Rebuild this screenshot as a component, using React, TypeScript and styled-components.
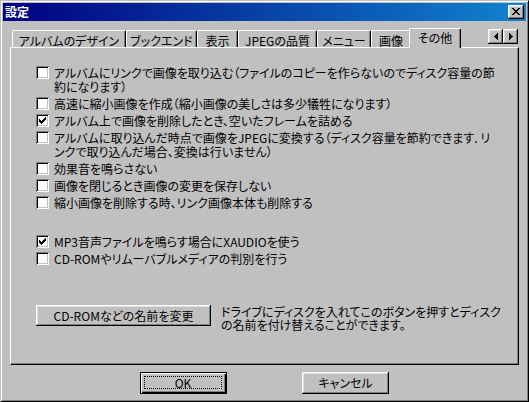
import React from 'react';
import styled, { createGlobalStyle } from 'styled-components';

const GlobalStyle = createGlobalStyle`
  html, body {
    margin: 0;
    padding: 0;
    background: #c0c0c0;
  }
  body {
    font-family: "Noto Sans CJK JP", "Noto Sans", sans-serif;
    font-size: 12px;
    color: #000;
    font-feature-settings: "palt";
  }
`;

const Window = styled.div`
  width: 529px;
  height: 402px;
  box-sizing: border-box;
  background: #c0c0c0;
  border: 1px solid;
  border-color: #c0c0c0 #000 #000 #c0c0c0;
  box-shadow: inset 1px 1px #fff, inset -1px -1px #808080;
  padding: 2px;
  display: flex;
  flex-direction: column;
`;

const TitleBar = styled.div`
  height: 18px;
  flex: none;
  display: flex;
  align-items: center;
  justify-content: space-between;
  padding: 0 2px 0 2px;
  background: linear-gradient(90deg, #000080, #1084d0);
`;

const Title = styled.span`
  color: #fff;
  font-weight: 700;
  font-size: 12px;
  line-height: 14px;
`;

const RaisedButton = styled.div`
  background: #c0c0c0;
  box-shadow: inset -1px -1px #000, inset 1px 1px #fff, inset -2px -2px #808080,
    inset 2px 2px #dfdfdf;
  box-sizing: border-box;
  display: flex;
  align-items: center;
  justify-content: center;
`;

const CaptionButton = styled(RaisedButton)`
  width: 16px;
  height: 14px;
  padding-bottom: 1px;
`;

const Body = styled.div`
  flex: 1;
  display: flex;
  flex-direction: column;
  padding: 7px 7px 0;
`;

const TabStrip = styled.div`
  height: 19px;
  flex: none;
  display: flex;
  align-items: flex-end;
  padding: 0 1px 0 2px;
`;

const Tab = styled.div<{ $w: number; $active?: boolean }>`
  width: ${(p) => p.$w + (p.$active ? 4 : 0)}px;
  height: ${(p) => (p.$active ? 20 : 17)}px;
  margin: ${(p) => (p.$active ? '0 -2px -1px' : '0')};
  box-sizing: border-box;
  flex: none;
  position: ${(p) => (p.$active ? 'relative' : 'static')};
  z-index: ${(p) => (p.$active ? 1 : 'auto')};
  background: #c0c0c0;
  border-top: 1px solid #fff;
  border-left: 1px solid #fff;
  border-right: 1px solid #000;
  border-radius: 2px 2px 0 0;
  box-shadow: inset -1px 0 #808080;
  display: flex;
  align-items: center;
  justify-content: center;
  padding: ${(p) => (p.$active ? '0 0 3px' : '2px 0 0')};
  line-height: 13px;
  white-space: nowrap;
`;

const TabScroller = styled.div`
  margin-left: auto;
  align-self: flex-start;
  margin-top: 1px;
  display: flex;
`;

const ScrollButton = styled(RaisedButton)`
  width: 15px;
  height: 15px;
`;

const Panel = styled.div`
  height: 318px;
  flex: none;
  box-sizing: border-box;
  border: 1px solid;
  border-color: #fff #000 #000 #fff;
  box-shadow: inset -1px -1px #808080;
  padding: 18px 0 0 25px;
  display: flex;
  flex-direction: column;
`;

const OptionList = styled.div<{ $top?: number }>`
  display: flex;
  flex-direction: column;
  gap: 4px;
  margin-top: ${(p) => p.$top ?? 0}px;
`;

const Option = styled.div<{ $multi?: boolean }>`
  display: flex;
  align-items: flex-start;
  gap: 5px;
  margin-bottom: ${(p) => (p.$multi ? -1 : 0)}px;
`;

const Box = styled.div`
  width: 13px;
  height: 13px;
  flex: none;
  box-sizing: border-box;
  background: #fff;
  box-shadow: inset 1px 1px #808080, inset -1px -1px #fff, inset 2px 2px #000,
    inset -2px -2px #c0c0c0;
  padding: 3px;
`;

const Label = styled.span<{ $multi?: boolean }>`
  line-height: ${(p) => (p.$multi ? 14 : 13)}px;
  white-space: nowrap;
`;

const RenameRow = styled.div`
  margin-top: 40px;
  display: flex;
  align-items: flex-start;
  gap: 10px;
`;

const PushButton = styled(RaisedButton)<{ $w: number; $h?: number }>`
  width: ${(p) => p.$w}px;
  height: ${(p) => p.$h ?? 21}px;
  padding-bottom: 1px;
  line-height: 13px;
  white-space: nowrap;
`;

const Hint = styled.div`
  line-height: 13px;
  white-space: nowrap;
`;

const Footer = styled.div`
  display: flex;
  justify-content: center;
  gap: 75px;
  padding-top: 7px;
`;

const DefaultButton = styled.div`
  width: 87px;
  height: 22px;
  box-sizing: border-box;
  border: 1px solid #000;
  background: #c0c0c0;
  box-shadow: inset 1px 1px #fff, inset -1px -1px #000, inset -2px -2px #808080;
  padding: 3px 4px 4px 3px;
  display: flex;
`;

const FocusRing = styled.div`
  flex: 1;
  border: 1px dotted #000;
  display: flex;
  align-items: center;
  justify-content: center;
  line-height: 12px;
`;

const Check = () => (
  <svg width="7" height="7" viewBox="0 0 7 7" shapeRendering="crispEdges" style={{ display: 'block' }}>
    <path
      fill="#000"
      d="M6 0h1v1h-1z M5 1h2v1h-2z M0 2h1v1h-1z M4 2h3v1h-3z M0 3h2v1h-2z M3 3h3v1h-3z M0 4h5v1h-5z M1 5h3v1h-3z M2 6h1v1h-1z"
    />
  </svg>
);

const CloseGlyph = () => (
  <svg width="8" height="7" viewBox="0 0 8 7" shapeRendering="crispEdges">
    <path
      fill="#000"
      d="M0 0h2v1h-2z M6 0h2v1h-2z M1 1h2v1h-2z M5 1h2v1h-2z M2 2h4v1h-4z M3 3h2v1h-2z M2 4h4v1h-4z M1 5h2v1h-2z M5 5h2v1h-2z M0 6h2v1h-2z M6 6h2v1h-2z"
    />
  </svg>
);

const Arrow = ({ dir }: { dir: 'left' | 'right' }) => (
  <svg
    width="4"
    height="7"
    viewBox="0 0 4 7"
    shapeRendering="crispEdges"
    style={{ transform: dir === 'right' ? 'scaleX(-1)' : undefined }}
  >
    <path fill="#000" d="M0 3h1v1h-1z M1 2h1v3h-1z M2 1h1v5h-1z M3 0h1v7h-1z" />
  </svg>
);

const tabs = [
  { label: 'アルバムのデザイン', w: 114 },
  { label: 'ブックエンド', w: 71 },
  { label: '表示', w: 41 },
  { label: 'JPEGの品質', w: 79 },
  { label: 'メニュー', w: 54 },
  { label: '画像', w: 40 },
  { label: 'その他', w: 48, active: true },
];

type Opt = { lines: string[]; checked?: boolean };

const general: Opt[] = [
  {
    lines: [
      'アルバムにリンクで画像を取り込む（ファイルのコピーを作らないのでディスク容量の節',
      '約になります）',
    ],
  },
  { lines: ['高速に縮小画像を作成（縮小画像の美しさは多少犠牲になります）'] },
  { lines: ['アルバム上で画像を削除したとき、空いたフレームを詰める'], checked: true },
  {
    lines: [
      'アルバムに取り込んだ時点で画像をJPEGに変換する（ディスク容量を節約できます. リ',
      'ンクで取り込んだ場合、変換は行いません）',
    ],
  },
  { lines: ['効果音を鳴らさない'] },
  { lines: ['画像を閉じるとき画像の変更を保存しない'] },
  { lines: ['縮小画像を削除する時、リンク画像本体も削除する'] },
];

const media: Opt[] = [
  { lines: ['MP3音声ファイルを鳴らす場合にXAUDIOを使う'], checked: true },
  { lines: ['CD-ROMやリムーバブルメディアの判別を行う'] },
];

const Options = ({ items, top }: { items: Opt[]; top?: number }) => (
  <OptionList $top={top}>
    {items.map((o, i) => {
      const multi = o.lines.length > 1;
      return (
        <Option key={i} $multi={multi}>
          <Box>{o.checked && <Check />}</Box>
          <Label $multi={multi}>
            {o.lines.map((l, j) => (
              <React.Fragment key={j}>
                {j > 0 && <br />}
                {l}
              </React.Fragment>
            ))}
          </Label>
        </Option>
      );
    })}
  </OptionList>
);

export default function App() {
  return (
    <>
      <GlobalStyle />
      <Window>
        <TitleBar>
          <Title>設定</Title>
          <CaptionButton>
            <CloseGlyph />
          </CaptionButton>
        </TitleBar>
        <Body>
          <TabStrip>
            {tabs.map((t) => (
              <Tab key={t.label} $w={t.w} $active={t.active}>
                {t.label}
              </Tab>
            ))}
            <TabScroller>
              <ScrollButton>
                <Arrow dir="left" />
              </ScrollButton>
              <ScrollButton>
                <Arrow dir="right" />
              </ScrollButton>
            </TabScroller>
          </TabStrip>
          <Panel>
            <Options items={general} />
            <Options items={media} top={26} />
            <RenameRow>
              <PushButton $w={175}>CD-ROMなどの名前を変更</PushButton>
              <Hint>
                ドライブにディスクを入れてこのボタンを押すとディスク
                <br />
                の名前を付け替えることができます。
              </Hint>
            </RenameRow>
          </Panel>
          <Footer>
            <DefaultButton>
              <FocusRing>OK</FocusRing>
            </DefaultButton>
            <PushButton $w={87} $h={22}>
              キャンセル
            </PushButton>
          </Footer>
        </Body>
      </Window>
    </>
  );
}
